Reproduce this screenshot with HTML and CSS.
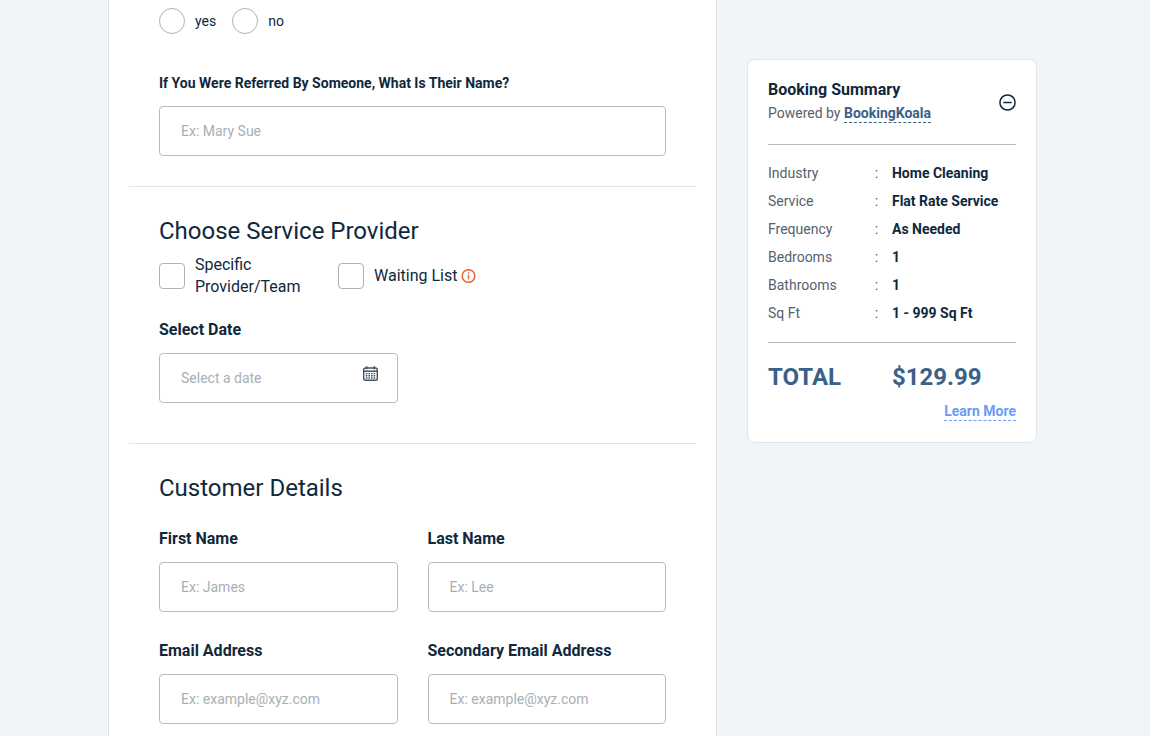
FILE: index.html
```html
<!DOCTYPE html>
<html lang="en">
<head>
<meta charset="utf-8">
<meta name="viewport" content="width=device-width, initial-scale=1">
<title>Booking</title>
<link rel="stylesheet" href="styles.css">
</head>
<body>
<div class="page">
  <form class="form-card">
    <section class="section section-referral">
      <div class="radio-row">
        <label class="choice choice-small"><input class="radio" type="radio" name="returning"><span>yes</span></label>
        <label class="choice choice-small"><input class="radio" type="radio" name="returning"><span>no</span></label>
      </div>
      <div class="field">
        <label class="label label-small" for="referrer">If You Were Referred By Someone, What Is Their Name?</label>
        <input class="input" id="referrer" type="text" placeholder="Ex: Mary Sue">
      </div>
    </section>

    <section class="section section-provider">
      <h2 class="heading">Choose Service Provider</h2>
      <div class="check-row">
        <label class="choice"><input class="checkbox" type="checkbox"><span>Specific Provider/Team</span></label>
        <div class="choice-with-info">
          <label class="choice"><input class="checkbox" type="checkbox"><span>Waiting List</span></label>
          <button class="icon-button info" type="button" aria-label="About the waiting list">
            <svg width="15" height="14" viewBox="0 0 15 14" fill="none" stroke="currentColor">
              <circle cx="7.5" cy="7" r="6.3" stroke-width="1.5"/>
              <path d="M7.5 5.8v4.6" stroke-width="1.4"/>
              <path d="M7.5 3.3v1.4" stroke-width="1.4"/>
            </svg>
          </button>
        </div>
      </div>
      <div class="field-grid">
        <div class="field">
          <label class="label" for="date">Select Date</label>
          <div class="date-box">
            <input class="input" id="date" type="text" placeholder="Select a date">
            <button class="icon-button calendar" type="button" aria-label="Open calendar">
              <svg width="15" height="15" viewBox="0 0 15 15" fill="none" stroke="currentColor">
                <rect x="0.7" y="2" width="13.6" height="12.2" rx="1.8" stroke-width="1.4"/>
                <path d="M0.7 5.2h13.6" stroke-width="1.5"/>
                <path d="M3.7 0.3v3M11.3 0.3v3" stroke-width="1.5"/>
                <path d="M5.4 7.6h1.6M8 7.6h1.6M10.6 7.6h1.6M2.8 9.8h1.6M5.4 9.8h1.6M8 9.8h1.6M10.6 9.8h1.6M2.8 12h1.6M5.4 12h1.6M8 12h1.6M2.8 7.6h1.6M10.6 12h1.6" stroke-width="1.4"/>
              </svg>
            </button>
          </div>
        </div>
      </div>
    </section>

    <section class="section section-customer">
      <h2 class="heading">Customer Details</h2>
      <div class="field-grid">
        <div class="field">
          <label class="label" for="first">First Name</label>
          <input class="input" id="first" type="text" placeholder="Ex: James">
        </div>
        <div class="field">
          <label class="label" for="last">Last Name</label>
          <input class="input" id="last" type="text" placeholder="Ex: Lee">
        </div>
        <div class="field">
          <label class="label" for="email">Email Address</label>
          <input class="input" id="email" type="email" placeholder="Ex: example@xyz.com">
        </div>
        <div class="field">
          <label class="label" for="email2">Secondary Email Address</label>
          <input class="input" id="email2" type="email" placeholder="Ex: example@xyz.com">
        </div>
      </div>
    </section>
  </form>

  <aside class="summary">
    <header class="summary-head">
      <div>
        <h3 class="summary-title">Booking Summary</h3>
        <p class="powered">Powered by <a class="link" href="#">BookingKoala</a></p>
      </div>
      <button class="icon-button" type="button" aria-label="Collapse summary">
        <svg width="17" height="17" viewBox="0 0 17 17" fill="none" stroke="currentColor" stroke-width="1.5">
          <circle cx="8.5" cy="8.5" r="7.6"/>
          <path d="M4.3 8.5h8.4"/>
        </svg>
      </button>
    </header>
    <table class="details">
      <tr><th scope="row">Industry</th><td class="colon">:</td><td>Home Cleaning</td></tr>
      <tr><th scope="row">Service</th><td class="colon">:</td><td>Flat Rate Service</td></tr>
      <tr><th scope="row">Frequency</th><td class="colon">:</td><td>As Needed</td></tr>
      <tr><th scope="row">Bedrooms</th><td class="colon">:</td><td>1</td></tr>
      <tr><th scope="row">Bathrooms</th><td class="colon">:</td><td>1</td></tr>
      <tr><th scope="row">Sq Ft</th><td class="colon">:</td><td>1 - 999 Sq Ft</td></tr>
    </table>
    <div class="total"><span>TOTAL</span><span>$129.99</span></div>
    <div class="more"><a class="link link-light" href="#">Learn More</a></div>
  </aside>
</div>
</body>
</html>
```

FILE: styles.css
```css
* { box-sizing: border-box; }

body {
  margin: 0;
  background: #eff5f9;
  color: #10283c;
  font: 400 14px/22px Roboto, "Liberation Sans", sans-serif;
}

h2, h3, p { margin: 0; }

.page {
  display: grid;
  grid-template-columns: minmax(0, 21fr) minmax(0, 10fr);
  gap: 30px;
  align-items: start;
  min-height: 100vh;
  padding: 0 113px 0 108px;
}

.form-card {
  align-self: stretch;
  padding: 0 20px;
  background: #fff;
  border: solid #dfe3e6;
  border-width: 0 1px;
}

.section { padding: 30px; }
.section + .section { border-top: 1px solid #e2e5e7; }
.section-referral { padding-top: 8px; }
.section-provider { padding-bottom: 40px; }
.section-customer { padding-bottom: 12px; }

.heading {
  font-size: 24px;
  font-weight: 400;
  line-height: 28px;
}
.section-provider .heading { margin-bottom: 9px; }
.section-customer .heading { margin-bottom: 25px; }

.radio-row {
  display: flex;
  gap: 16px;
  margin-bottom: 37px;
}

.check-row {
  display: grid;
  grid-template-columns: repeat(3, minmax(0, 1fr));
  gap: 30px;
  margin-bottom: 20px;
}

.choice {
  display: flex;
  align-items: center;
  gap: 10px;
  font-size: 16px;
}
.choice-small { font-size: 14px; }

.choice-with-info {
  display: flex;
  align-items: center;
  gap: 4px;
  white-space: nowrap;
}

.radio, .checkbox {
  appearance: none;
  flex: none;
  width: 26px;
  height: 26px;
  margin: 0;
  background: #fff;
  border: 1px solid #aab3ba;
  border-radius: 4px;
}
.radio { border-radius: 50%; }
.radio:checked, .checkbox:checked { background: #3a6186; }

.field-grid {
  display: grid;
  grid-template-columns: repeat(2, minmax(0, 1fr));
  gap: 27px 30px;
}

.field {
  display: flex;
  flex-direction: column;
  gap: 11px;
}

.label {
  font-size: 16px;
  font-weight: 700;
  line-height: 24px;
}
.label-small { font-size: 14px; }

.input {
  width: 100%;
  height: 50px;
  padding: 0 21px;
  background: #fff;
  border: 1px solid #b6bdc2;
  border-radius: 4px;
  color: inherit;
  font: inherit;
}
.input::placeholder { color: #a7b0b6; opacity: 1; }

.date-box { position: relative; }

.icon-button {
  display: flex;
  flex: none;
  padding: 0;
  background: none;
  border: 0;
  color: inherit;
  cursor: pointer;
}
.info { color: #f0602c; }
.calendar {
  position: absolute;
  top: 13px;
  right: 20px;
  color: #44525f;
}

.summary {
  margin-top: 59px;
  padding: 20px;
  background: #fff;
  border: 1px solid #e2e6e9;
  border-radius: 8px;
}

.summary-head {
  display: flex;
  align-items: center;
  justify-content: space-between;
  padding-bottom: 20px;
  border-bottom: 1px solid #b4bcc4;
}

.summary-title {
  font-size: 16px;
  font-weight: 700;
  line-height: 20px;
}

.powered {
  padding-top: 2px;
  color: #54626e;
}

.link {
  padding-bottom: 1px;
  border-bottom: 1px dashed;
  color: #3a6186;
  font-weight: 700;
  text-decoration: none;
}
.link-light { color: #6c9cf8; }

.details {
  width: 100%;
  margin: 14px 0 15px;
  border-collapse: collapse;
  table-layout: fixed;
  line-height: 28px;
}
.details th, .details td {
  padding: 0;
  text-align: left;
}
.details th {
  width: 43%;
  color: #54626e;
  font-weight: 400;
}
.details td { font-weight: 700; }
.details .colon {
  width: 7%;
  color: #54626e;
  font-weight: 400;
}

.total {
  display: grid;
  grid-template-columns: 1fr 1fr;
  padding-top: 20px;
  border-top: 1px solid #b4bcc4;
  color: #3a6186;
  font-size: 24px;
  font-weight: 700;
  line-height: 28px;
}

.more {
  padding-top: 9px;
  text-align: right;
}
```
